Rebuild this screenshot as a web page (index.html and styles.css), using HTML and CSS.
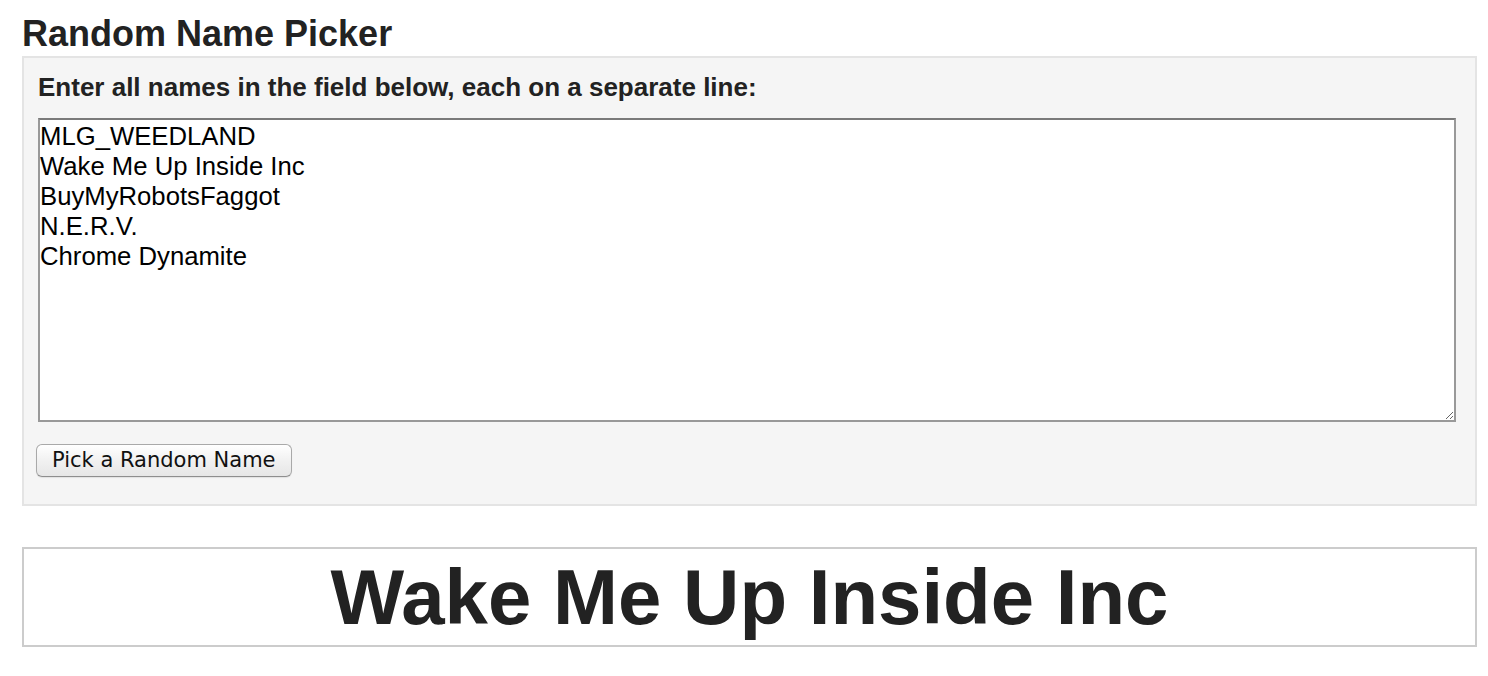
FILE: index.html
```html
<!DOCTYPE html>
<html>
<head>
<meta charset="utf-8">
<title>Random Name Picker</title>
<link rel="stylesheet" href="styles.css">
</head>
<body>
<div class="page">
  <h1 class="title">Random Name Picker</h1>
  <div class="panel">
    <label class="label" for="names">Enter all names in the field below, each on a separate line:</label>
    <textarea id="names" class="names">MLG_WEEDLAND
Wake Me Up Inside Inc
BuyMyRobotsFaggot
N.E.R.V.
Chrome Dynamite</textarea>
    <button class="pick" type="button">Pick a Random Name</button>
  </div>
  <div class="result">Wake Me Up Inside Inc</div>
</div>
</body>
</html>
```
FILE: styles.css
```css
html, body {
  margin: 0;
  padding: 0;
  background: #ffffff;
}

body {
  font-family: "Liberation Sans", Arial, Helvetica, sans-serif;
  color: #222222;
}

.page {
  padding: 13px 11px 0 22px;
}

.title {
  margin: 0 0 2px 0;
  font-size: 36px;
  font-weight: bold;
  line-height: 41px;
  color: #222222;
}

.panel {
  background: #f5f5f5;
  border: 2px solid #e4e4e4;
  padding: 14px 19px 27px 14px;
  display: flex;
  flex-direction: column;
  align-items: flex-start;
}

.label {
  display: block;
  font-size: 26px;
  font-weight: bold;
  line-height: 30px;
  color: #222222;
  margin-bottom: 16px;
}

.names {
  display: block;
  width: 100%;
  box-sizing: border-box;
  height: 304px;
  margin: 0;
  padding: 1px 0;
  border: 2px solid #999999;
  border-top-color: #7a7a7a;
  background: #ffffff;
  font-family: "Liberation Sans", Arial, Helvetica, sans-serif;
  font-size: 25.7px;
  line-height: 30px;
  color: #000000;
  resize: both;
  outline: none;
}

.pick {
  margin: 22px 0 0 -2px;
  height: 33px;
  padding: 0 15px;
  font-family: "DejaVu Sans", "Lucida Grande", Verdana, sans-serif;
  font-size: 21px;
  line-height: 31px;
  color: #111111;
  background: linear-gradient(#ffffff, #f1f1f1 50%, #e6e6e6);
  border: 1px solid #a9a9a9;
  border-bottom-color: #8e8e8e;
  border-radius: 6px;
  box-shadow: 0 1px 1px rgba(0, 0, 0, 0.08);
}

.result {
  margin-top: 41px;
  border: 2px solid #cccccc;
  text-align: center;
  font-size: 78px;
  font-weight: bold;
  line-height: 96px;
  color: #222222;
}
```
